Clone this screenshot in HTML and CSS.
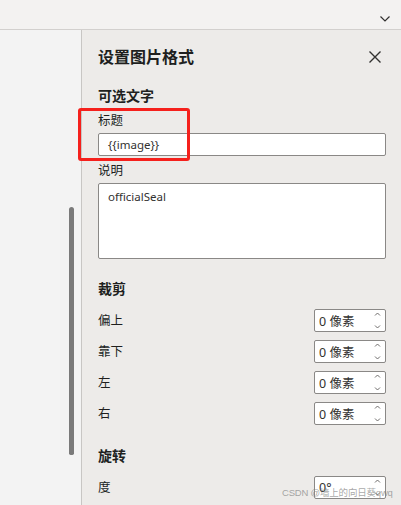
FILE: index.html
```html
<!DOCTYPE html>
<html lang="zh">
<head>
<meta charset="utf-8">
<link rel="stylesheet" href="styles.css">
</head>
<body>
<div class="app">
  <div class="topbar">
    <svg class="chev" width="10" height="6" viewBox="0 0 10 6"><path d="M0.5 0.5 L5 5 L9.5 0.5" fill="none" stroke="#323130" stroke-width="1.2"/></svg>
  </div>
  <div class="main">
    <div class="left"><div class="scrollbar"></div></div>
    <div class="panel">
      <div class="title-row">
        <span class="title">设置图片格式</span>
        <svg class="close" width="12" height="12" viewBox="0 0 12 12"><path d="M0.5 0.5 L11.5 11.5 M11.5 0.5 L0.5 11.5" fill="none" stroke="#323130" stroke-width="1.4"/></svg>
      </div>
      <div class="section-title first">可选文字</div>
      <div class="label l-title">标题</div>
      <div class="input">{{image}}</div>
      <div class="label l-desc">说明</div>
      <div class="textarea">officialSeal</div>

      <div class="section-title crop">裁剪</div>
      <div class="rows">
        <div class="row"><span class="label">偏上</span><div class="spin"><span>0 像素</span><svg class="arrows" width="7" height="17" viewBox="0 0 7 17"><path d="M1 3.5 L3.5 1 L6 3.5 M1 13.5 L3.5 16 L6 13.5" fill="none" stroke="#605e5c" stroke-width="0.9"/></svg></div></div>
        <div class="row"><span class="label">靠下</span><div class="spin"><span>0 像素</span><svg class="arrows" width="7" height="17" viewBox="0 0 7 17"><path d="M1 3.5 L3.5 1 L6 3.5 M1 13.5 L3.5 16 L6 13.5" fill="none" stroke="#605e5c" stroke-width="0.9"/></svg></div></div>
        <div class="row"><span class="label">左</span><div class="spin"><span>0 像素</span><svg class="arrows" width="7" height="17" viewBox="0 0 7 17"><path d="M1 3.5 L3.5 1 L6 3.5 M1 13.5 L3.5 16 L6 13.5" fill="none" stroke="#605e5c" stroke-width="0.9"/></svg></div></div>
        <div class="row"><span class="label">右</span><div class="spin"><span>0 像素</span><svg class="arrows" width="7" height="17" viewBox="0 0 7 17"><path d="M1 3.5 L3.5 1 L6 3.5 M1 13.5 L3.5 16 L6 13.5" fill="none" stroke="#605e5c" stroke-width="0.9"/></svg></div></div>
      </div>

      <div class="section-title rotate">旋转</div>
      <div class="rows rows-rot">
        <div class="row"><span class="label">度</span><div class="spin"><span>0°</span><svg class="arrows" width="7" height="17" viewBox="0 0 7 17"><path d="M1 3.5 L3.5 1 L6 3.5 M1 13.5 L3.5 16 L6 13.5" fill="none" stroke="#605e5c" stroke-width="0.9"/></svg></div></div>
      </div>
    </div>
  </div>
  <div class="highlight"></div>
  <div class="watermark">CSDN @墙上的向日葵qwq</div>
</div>
</body>
</html>
```

FILE: styles.css
```css
html, body {
  margin: 0;
  padding: 0;
}
body {
  width: 401px;
  height: 505px;
  overflow: hidden;
  font-family: "Noto Sans", "Noto Sans CJK SC", sans-serif;
  color: #201f1e;
}
.app {
  position: relative;
  width: 401px;
  height: 505px;
  display: flex;
  flex-direction: column;
}
.topbar {
  height: 29px;
  background: #f3f2f1;
  border-bottom: 1px solid #d2d0ce;
  box-shadow: 0 1px 1px rgba(0,0,0,0.06);
  display: flex;
  justify-content: flex-end;
  align-items: flex-end;
  padding-right: 11px;
  box-sizing: content-box;
}
.chev {
  margin-bottom: 7px;
}
.main {
  flex: 1;
  display: flex;
  min-height: 0;
}
.left {
  width: 81px;
  background: #f3f3f3;
  border-right: 1px solid #c8c6c4;
  flex-shrink: 0;
}
.scrollbar {
  margin-left: 69px;
  margin-top: 177px;
  width: 5px;
  height: 248px;
  border-radius: 3px 3px 2px 2px;
  background: #7a7a7a;
}
.panel {
  flex: 1;
  background: #edebe9;
  padding: 16px 15px 0 16px;
  display: flex;
  flex-direction: column;
}
.title-row {
  height: 22px;
  display: flex;
  align-items: center;
  justify-content: space-between;
}
.title {
  font-size: 16px;
  font-weight: 700;
  line-height: 22px;
  color: #201f1e;
}
.close {
  margin-right: 5px;
}
.section-title {
  font-size: 14px;
  font-weight: 700;
  line-height: 20px;
}
.section-title.first { margin-top: 18px; }
.section-title.crop { margin-top: 20px; }
.section-title.rotate { margin-top: 21px; }
.label {
  font-size: 12.5px;
  line-height: 16px;
  color: #201f1e;
}
.l-title { margin-top: 7px; }
.l-desc { margin-top: 7px; }
.input {
  margin-top: 4px;
  height: 23px;
  box-sizing: border-box;
  border: 1px solid #8a8886;
  border-radius: 2px;
  background: #ffffff;
  font-size: 11.5px;
  line-height: 21px;
  padding-left: 9px;
  color: #323130;
}
.textarea {
  margin-top: 4px;
  height: 76px;
  box-sizing: border-box;
  border: 1px solid #8a8886;
  border-radius: 2px;
  background: #ffffff;
  font-size: 11.5px;
  line-height: 16px;
  padding: 5px 9px;
  color: #323130;
}
.rows {
  margin-top: 10px;
  display: flex;
  flex-direction: column;
  gap: 8px;
}
.row {
  height: 23px;
  display: flex;
  align-items: center;
  justify-content: space-between;
}
.spin {
  width: 72px;
  height: 23px;
  box-sizing: border-box;
  border: 1px solid #8a8886;
  border-radius: 2px;
  background: #ffffff;
  display: flex;
  align-items: center;
  justify-content: space-between;
  padding: 0 4px 0 4px;
  font-size: 12.5px;
  color: #323130;
}
.arrows {
  display: block;
}
.highlight {
  position: absolute;
  left: 78px;
  top: 108px;
  width: 112px;
  height: 53px;
  box-sizing: border-box;
  border: 3px solid #f5201c;
  border-radius: 3px;
}
.watermark {
  position: absolute;
  left: 282px;
  top: 486px;
  font-size: 9.5px;
  line-height: 13px;
  letter-spacing: -0.2px;
  color: rgba(130,130,130,0.7);
  white-space: nowrap;
  font-family: "Liberation Sans", "Noto Sans CJK SC", sans-serif;
}
```
